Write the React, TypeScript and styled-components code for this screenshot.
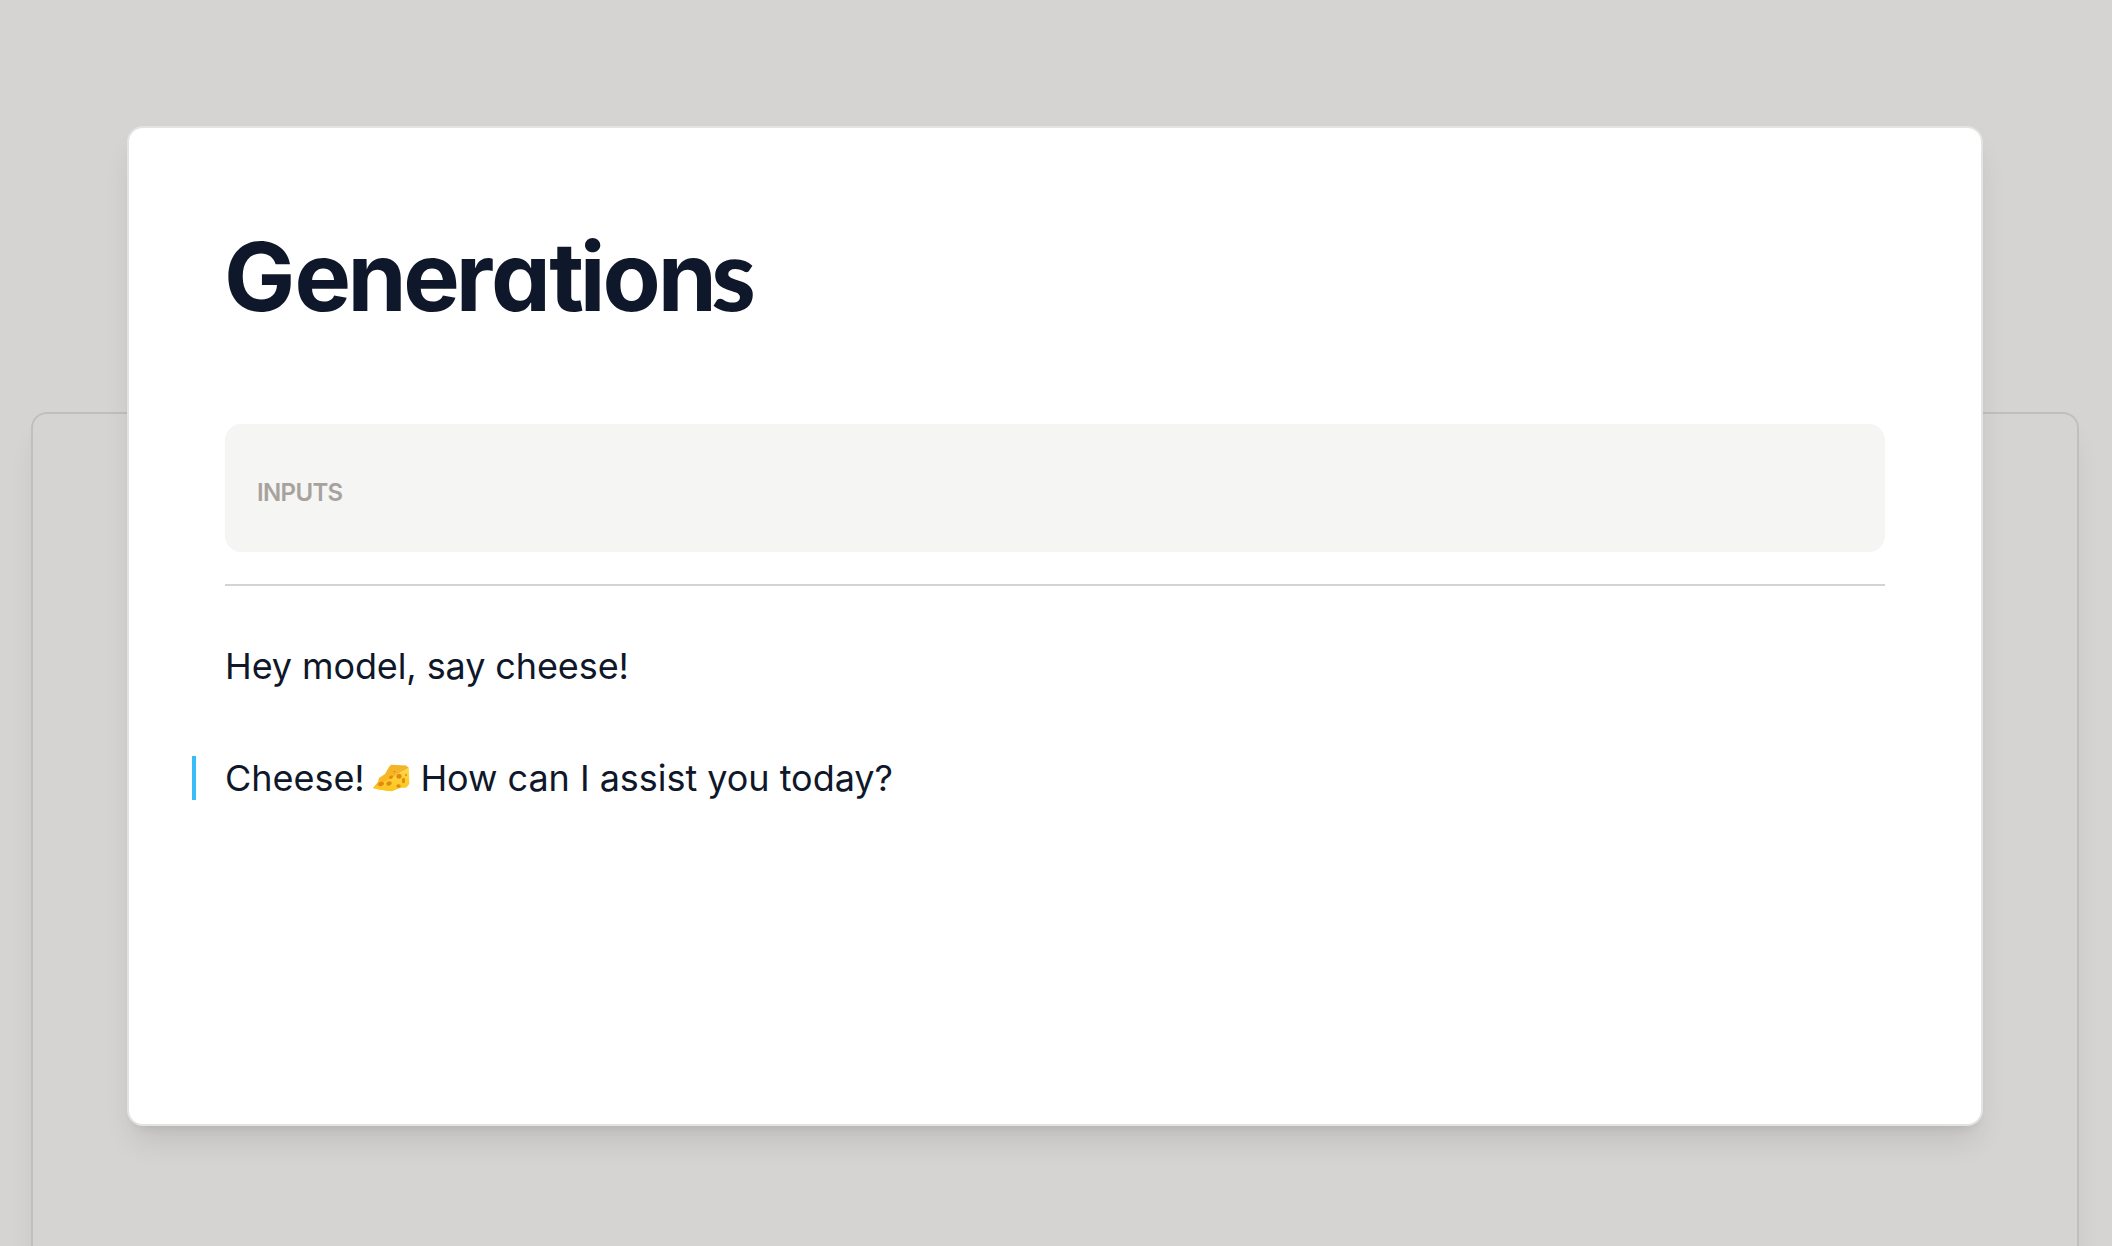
import React from "react";
import styled, { createGlobalStyle } from "styled-components";

const GlobalStyle = createGlobalStyle`
  * { box-sizing: border-box; }
  html, body { margin: 0; padding: 0; }
  body { font-family: Inter, "Liberation Sans", sans-serif; color: #0f172a; }
`;

const Page = styled.div`
  width: 100%;
  height: 1246px;
  overflow: hidden;
  background: #d5d4d2;
  padding: 412px 33px 0 31px;
  position: relative;
`;

const BackPanel = styled.div`
  height: 1000px;
  border: 2px solid #c0bfbe;
  border-radius: 16px;
  box-shadow: 0 20px 30px -6px rgba(0, 0, 0, 0.075), 0 8px 12px -8px rgba(0, 0, 0, 0.075);
`;

const Overlay = styled.div`
  position: absolute;
  inset: 0;
  padding: 126px 129px 120px 127px;
  display: flex;
`;

const Dialog = styled.main`
  flex: 1;
  background: #fff;
  border: 2px solid #e3e3e2;
  border-radius: 16px;
  padding: 96px;
  box-shadow: 0 20px 30px -6px rgba(0, 0, 0, 0.1), 0 8px 12px -8px rgba(0, 0, 0, 0.1);
`;

const Title = styled.h1`
  margin: 0 0 104px -1px;
  padding-top: 5px;
  height: 96px;
  font-size: 95px;
  line-height: 96px;
  font-weight: 700;
  font-feature-settings: "cv11";
  white-space: nowrap;
`;

const Letter = styled.span<{ $kern: number }>`
  letter-spacing: ${(p) => p.$kern}px;
`;

const FinalS = styled.span`
  font-family: Lato, sans-serif;
  font-size: 100px;
  font-weight: 900;
  line-height: 0;
`;

const Inputs = styled.section`
  height: 128px;
  padding: 10px 32px 0;
  display: flex;
  align-items: center;
  background: #f5f5f4;
  border-radius: 16px;
`;

const Label = styled.h2`
  margin: 0;
  font-size: 24px;
  line-height: 32px;
  font-weight: 600;
  letter-spacing: -0.65px;
  color: #a8a29e;
`;

const Divider = styled.hr`
  margin: 32px 0 58px;
  border: 0;
  height: 2px;
  background: #d6d3d1;
`;

const Message = styled.p<{ $generated?: boolean }>`
  margin: 0 0 68px -33px;
  padding-left: 29px;
  height: 44px;
  border-left: 4px solid ${(p) => (p.$generated ? "#38bdf8" : "transparent")};
  font-size: 36px;
  line-height: 44px;
  letter-spacing: ${(p) => (p.$generated ? "-0.03px" : "-0.1px")};
  white-space: pre;
`;

const Emoji = styled.svg`
  width: 38px;
  height: 28px;
  margin-left: -2.5px;
  vertical-align: -1px;
`;

const Cheese = () => (
  <Emoji viewBox="0 0 38 28" role="img" aria-label="cheese">
    <defs>
      <linearGradient id="rind" x1="0" y1="1" x2="1" y2="0">
        <stop offset="0" stopColor="#ffb91c" />
        <stop offset="1" stopColor="#f0b32b" />
      </linearGradient>
      <linearGradient id="side" x1="0" y1="0" x2="0" y2="1">
        <stop offset="0" stopColor="#ffda49" />
        <stop offset="1" stopColor="#fbc41e" />
      </linearGradient>
    </defs>
    <path d="M1 24 6 18 7 14 13 10 17 3 19 .8 34 1.4 37 4 24 11 19 27Q9 26 1 24Z" fill="url(#rind)" />
    <path d="M1 24 23 12 36.8 3.5 37.3 20 34.5 23.5 28 24 20 27.3Q9 26.5 1 24Z" fill="url(#side)" />
    <g fill="#e28a0e">
      <ellipse cx="9" cy="20" rx="3" ry="2" transform="rotate(-20 9 20)" />
      <ellipse cx="17" cy="19.5" rx="2.7" ry="2.1" transform="rotate(-20 17 19.5)" />
      <ellipse cx="19" cy="13.2" rx="2" ry="1.6" transform="rotate(-20 19 13.2)" />
      <ellipse cx="27" cy="12.3" rx="2.6" ry="2.5" />
      <ellipse cx="31.5" cy="16.5" rx="1.6" ry="2.8" />
      <ellipse cx="26.5" cy="22" rx="2.2" ry="1.7" />
      <ellipse cx="22.5" cy="7.8" rx="1.1" ry=".8" />
      <ellipse cx="34" cy="11" rx=".8" ry="1.2" />
    </g>
  </Emoji>
);

const kerning: [string, number][] = [
  ["G", -0.9],
  ["e", -3.4],
  ["n", -3.5],
  ["e", -4],
  ["r", -3.6],
  ["a", -1.6],
  ["t", -4.2],
  ["i", -3.2],
  ["o", -2.8],
  ["n", -5.5],
];

export default function App() {
  return (
    <Page>
      <GlobalStyle />
      <BackPanel />
      <Overlay>
        <Dialog>
          <Title>
            {kerning.map(([char, kern], i) => (
              <Letter key={i} $kern={kern}>
                {char}
              </Letter>
            ))}
            <FinalS>s</FinalS>
          </Title>
          <Inputs>
            <Label>INPUTS</Label>
          </Inputs>
          <Divider />
          <Message>Hey model, say cheese!</Message>
          <Message $generated>
            Cheese! <Cheese /> How can I assist you today?
          </Message>
        </Dialog>
      </Overlay>
    </Page>
  );
}
